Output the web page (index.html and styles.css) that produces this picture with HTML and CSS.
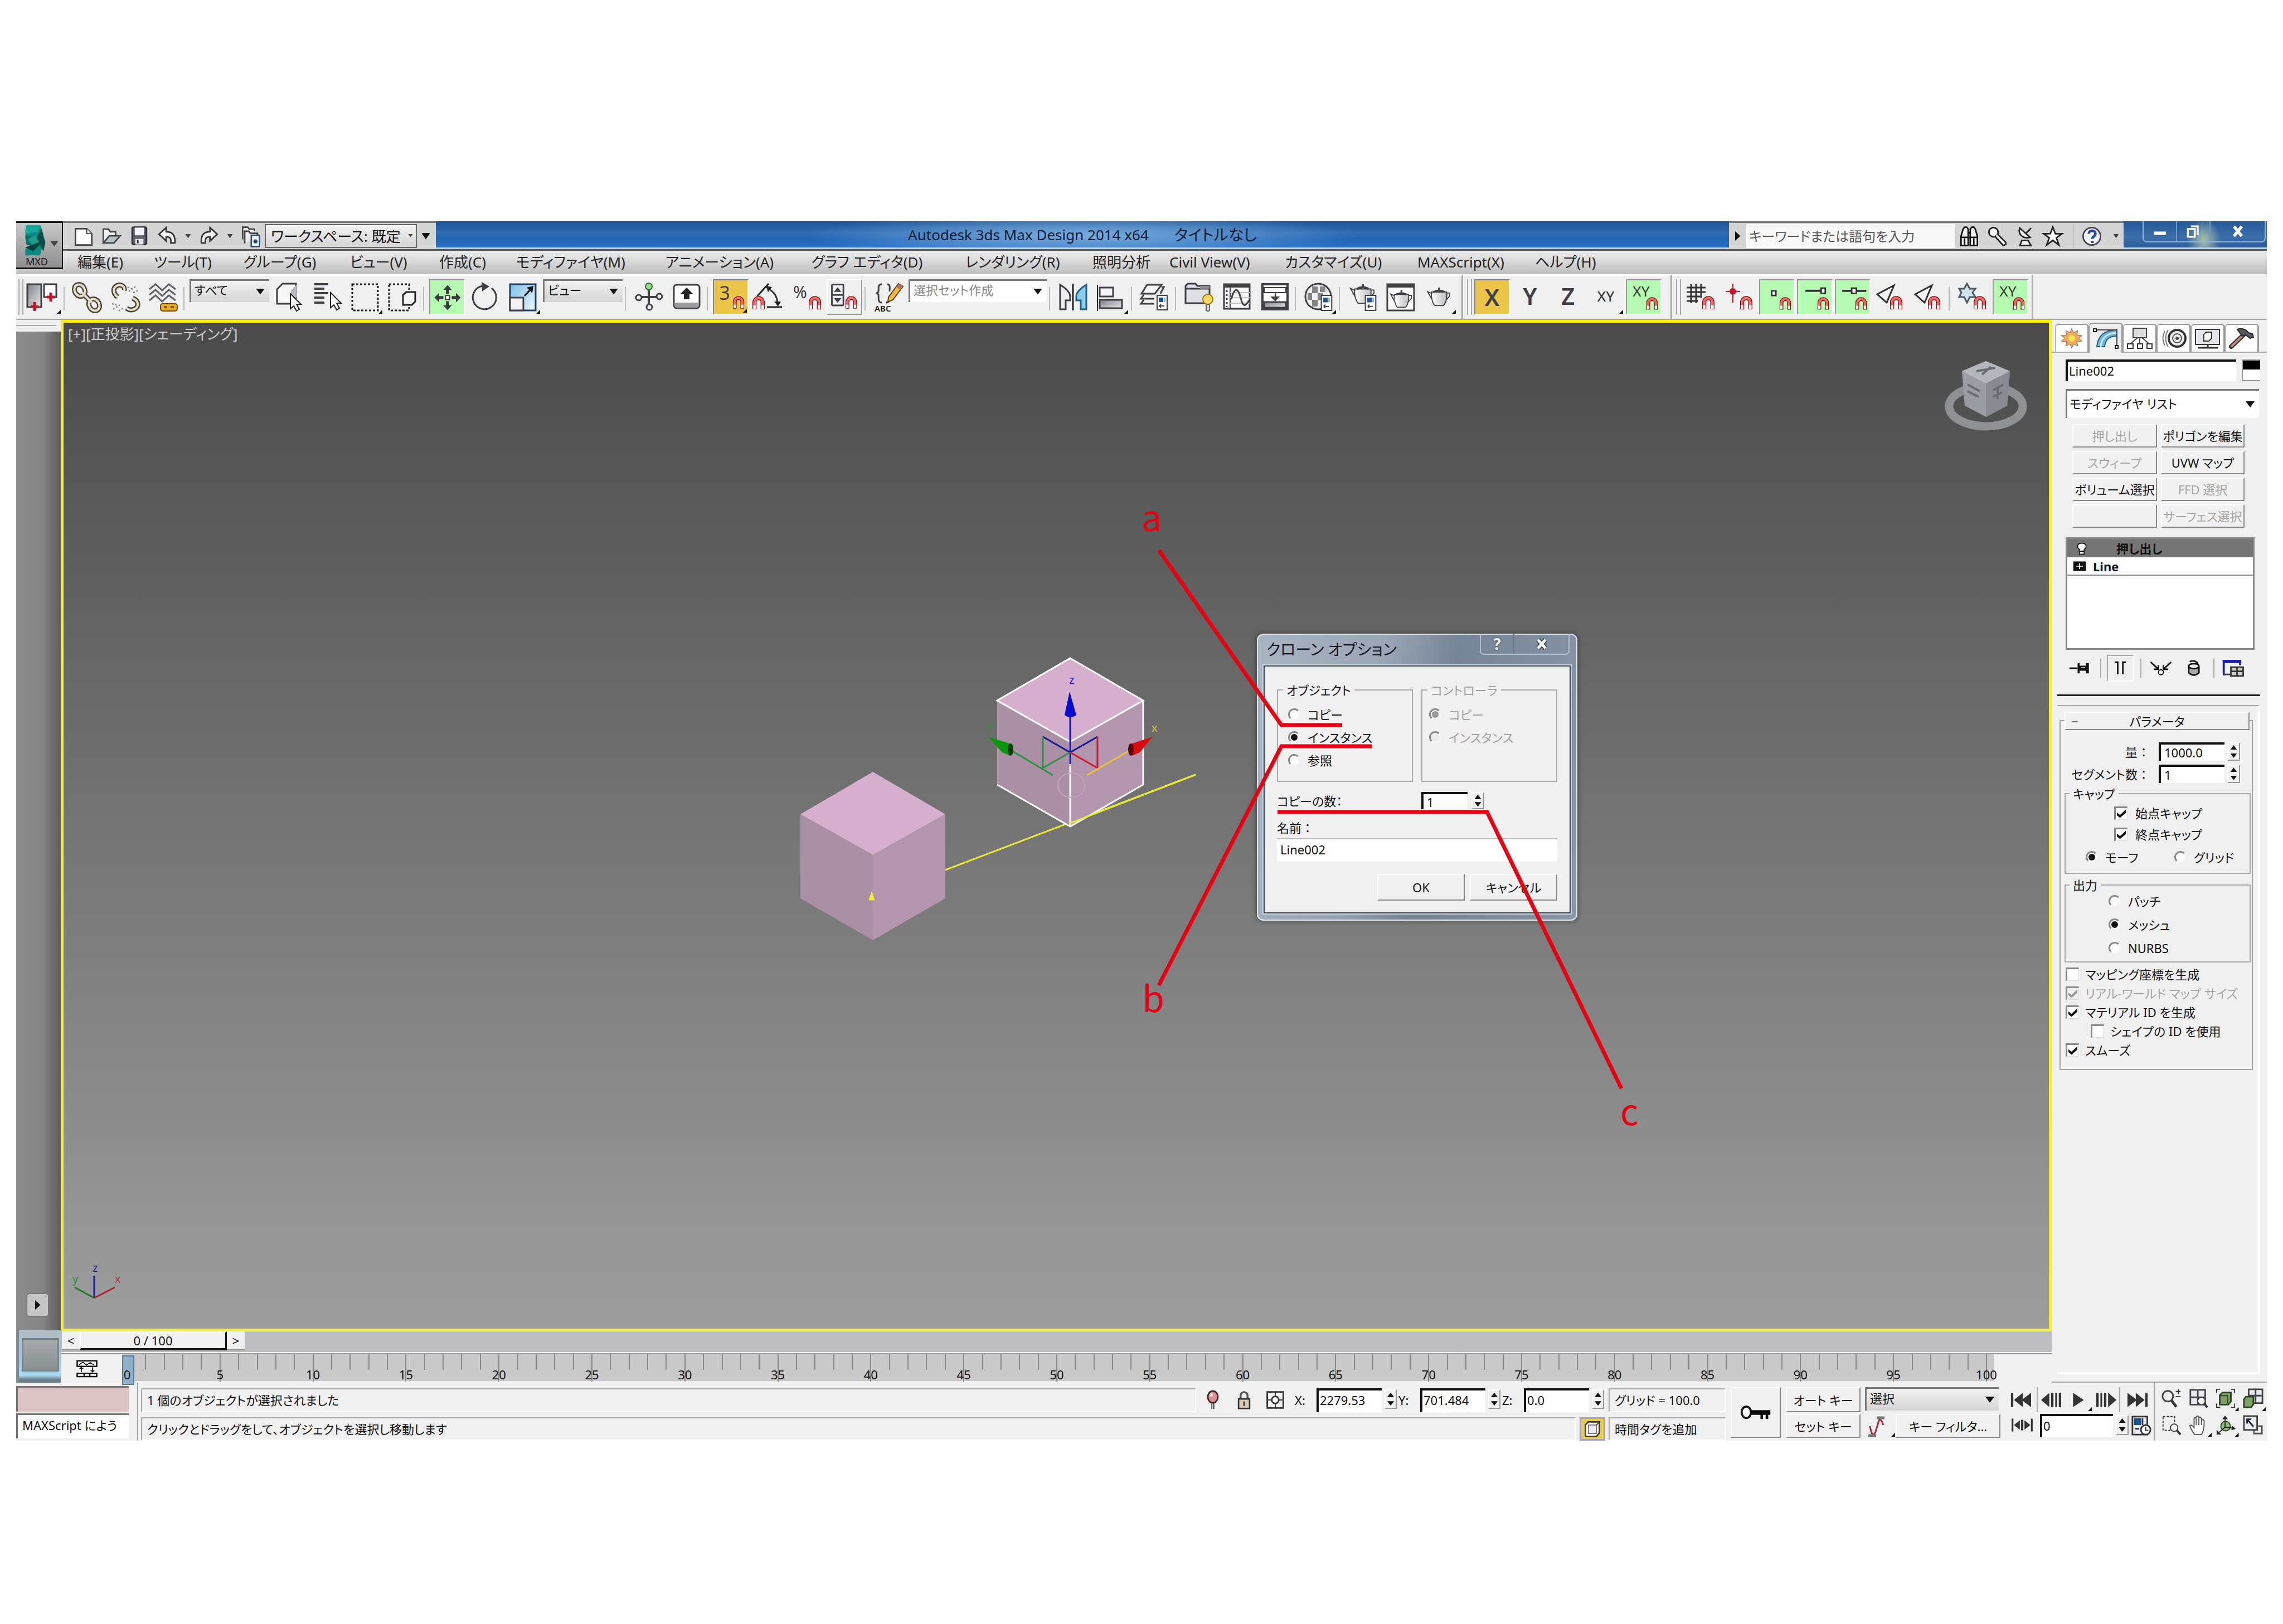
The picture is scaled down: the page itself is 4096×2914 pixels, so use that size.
FILE: index.html
```html
<!DOCTYPE html>
<html lang="ja">
<head>
<meta charset="utf-8">
<title>Autodesk 3ds Max Design 2014 x64</title>
<link rel="stylesheet" href="styles.css">
</head>
<body>
<svg class="sprite" aria-hidden="true">
  <defs>
    <linearGradient id="g-steel" x1="0" y1="0" x2="1" y2="1"><stop offset="0" stop-color="#7d8088"/><stop offset="1" stop-color="#e8e8ec"/></linearGradient>
    <linearGradient id="g-sky" x1="0" y1="0" x2="1" y2="1"><stop offset="0" stop-color="#7fc0e8"/><stop offset="1" stop-color="#eaf6fd"/></linearGradient>
    <linearGradient id="g-pot" x1="0" y1="0" x2="1" y2="0"><stop offset="0" stop-color="#fff"/><stop offset="1" stop-color="#bdbdc2"/></linearGradient>
  </defs>
  <symbol id="magnet" viewBox="0 0 24 26"><path d="M4 25V11a8 8 0 0 1 16 0v14" fill="none" stroke="#7a1218" stroke-width="8"/><path d="M4 18V11a8 8 0 0 1 16 0v7" fill="none" stroke="#ee6a68" stroke-width="5"/><path d="M4 24v-7M20 24v-7" stroke="#fff" stroke-width="5"/></symbol>
  <symbol id="card" viewBox="0 0 20 28"><rect x="1" y="1" width="18" height="26" fill="#fff" stroke="#3f3f46" stroke-width="2"/><rect x="4" y="5" width="8" height="8" fill="#1d5288"/><rect x="13" y="5" width="3" height="8" fill="#8fb4d4"/><path d="M5 20h9M5 20l3-3M5 20l3 3" stroke="#3f3f46" stroke-width="2" fill="none"/></symbol>
  <symbol id="pot" viewBox="0 0 48 40"><path d="M10 10C8 22 14 36 17 37h16c4-2 9-14 7-27z" fill="url(#g-pot)" stroke="#3f3f46" stroke-width="2"/><path d="M11 13L2 9l9 16M40 12h6v6l-7 8" fill="none" stroke="#3f3f46" stroke-width="2"/><path d="M14 10q11-6 22 0M25 7V1" stroke="#3f3f46" stroke-width="4" fill="none"/></symbol>
  <symbol id="panels" viewBox="0 0 64 64"><rect x="3" y="9" width="25" height="41" fill="url(#g-steel)" stroke="#3f3f46" stroke-width="3"/><rect x="33" y="9" width="22" height="23" fill="#fff" stroke="#3f3f46" stroke-width="3"/><path d="M16 41v16M9 49h14M45 24v16M38 32h14" stroke="#c01828" stroke-width="5"/></symbol>
  <symbol id="link" viewBox="0 0 64 64"><g fill="none" stroke="#4b463c" stroke-width="9"><ellipse cx="18" cy="20" rx="9" ry="11" transform="rotate(-30 18 20)"/><ellipse cx="44" cy="46" rx="9" ry="11" transform="rotate(-30 44 46)"/><path d="M22 24l18 18"/></g><g fill="none" stroke="#e7dfc8" stroke-width="4"><ellipse cx="18" cy="20" rx="9" ry="11" transform="rotate(-30 18 20)"/><ellipse cx="44" cy="46" rx="9" ry="11" transform="rotate(-30 44 46)"/><path d="M22 24l18 18"/></g></symbol>
  <symbol id="unlink" viewBox="0 0 64 64"><g fill="none" stroke="#4b463c" stroke-width="9"><path d="M30 20c2-8-8-12-14-8-7 4-6 14 2 20M34 52c8 6 18 2 20-5 1-6-2-10-9-13"/></g><g fill="none" stroke="#e7dfc8" stroke-width="4"><path d="M30 20c2-8-8-12-14-8-7 4-6 14 2 20M34 52c8 6 18 2 20-5 1-6-2-10-9-13"/></g><path d="M36 14l8 3M38 22l14-10M46 24l10-4M8 44l10 3M10 54l12-8M20 57l8-5" stroke="#777" stroke-width="2" stroke-dasharray="3 3"/></symbol>
  <symbol id="bind" viewBox="0 0 64 64"><path d="M7 18l11-9 12 11 12-11 12 9M7 28l11-9 12 11 12-11 12 9M7 38l11-9 12 11 12-11 12 9" fill="none" stroke="#60606a" stroke-width="3"/><rect x="27" y="44" width="30" height="13" rx="4" fill="#e8a823" stroke="#6d4a08" stroke-width="2"/><path d="M33 50h6M45 50h6" stroke="#6d4a08" stroke-width="3"/></symbol>
  <symbol id="selobj" viewBox="0 0 64 64"><path d="M10 40V18l10-10h24v26l-8 10H10z" fill="#f7f7f7" stroke="#3f3f46" stroke-width="3"/><path d="M35 20l10-10v22l-10 8z" fill="#b8b8be"/><path d="M34 26v27l6-5 5 9 5-3-5-9h8z" fill="#fff" stroke="#222" stroke-width="2"/></symbol>
  <symbol id="sellist" viewBox="0 0 64 64"><path d="M9 9h25M9 17h18M9 25h25M9 33h18M9 42h18" stroke="#3f3f46" stroke-width="4"/><path d="M38 24v27l6-5 5 9 5-3-5-9h8z" fill="#fff" stroke="#222" stroke-width="2"/></symbol>
  <symbol id="rect" viewBox="0 0 64 64"><rect x="9" y="9" width="46" height="47" fill="none" stroke="#222" stroke-width="3" stroke-dasharray="4 3"/></symbol>
  <symbol id="cross" viewBox="0 0 64 64"><rect x="7" y="9" width="36" height="47" fill="none" stroke="#222" stroke-width="3" stroke-dasharray="4 3"/><path d="M32 42V28l6-5h16v17l-6 6H32z" fill="#f4f4f4" stroke="#222" stroke-width="3"/></symbol>
  <symbol id="move" viewBox="0 0 64 64"><path d="M33 9l8 9h-5v8h-6v-8h-5zM33 57l8-9h-5v-8h-6v8h-5zM8 33l9-9v6h8v6h-8v6zM58 33l-9-9v6h-8v6h8v6z" fill="#3a3a40"/><rect x="29" y="29" width="8" height="8" fill="#fff" stroke="#3a3a40" stroke-width="2"/></symbol>
  <symbol id="rot" viewBox="0 0 64 64"><path d="M44 16a21 21 0 1 1-16-4" fill="none" stroke="#3f3f46" stroke-width="3"/><path d="M26 5l14 8-13 9z" fill="#3f3f46"/></symbol>
  <symbol id="scale" viewBox="0 0 64 64"><rect x="9" y="9" width="46" height="47" fill="url(#g-sky)" stroke="#1e3f60" stroke-width="3"/><rect x="9" y="33" width="24" height="23" fill="#f2f2f4" stroke="#3f3f46" stroke-width="3"/><path d="M35 30l14-15" stroke="#111" stroke-width="3"/><path d="M39 15l12-3-2 13z" fill="#111"/></symbol>
  <symbol id="pivot" viewBox="0 0 64 64"><path d="M32 15v34M12 32h40" stroke="#3f3f46" stroke-width="4"/><circle cx="32" cy="13" r="6" fill="#9fd692" stroke="#2e6a2a" stroke-width="2"/><g fill="#f0f0f0" stroke="#3f3f46" stroke-width="3"><circle cx="14" cy="33" r="5"/><circle cx="51" cy="31" r="5"/><circle cx="33" cy="50" r="5"/></g></symbol>
  <symbol id="kb" viewBox="0 0 64 64"><rect x="9" y="10" width="46" height="42" rx="5" fill="#fff" stroke="#3f3f46" stroke-width="3"/><path d="M11 42h42v8H11z" fill="#9a9aa2"/><path d="M32 15l12 12h-7v9H27v-9h-7z" fill="#222"/></symbol>
  <symbol id="angle" viewBox="0 0 64 64"><path d="M12 30L32 8M29 50h27" stroke="#222" stroke-width="3"/><path d="M31 17c12 6 17 16 17 28" fill="none" stroke="#333" stroke-width="3"/><path d="M27 12l11 2-7 9zM42 40l12 0-5 9z" fill="#222"/><use href="#magnet" x="3" y="30" width="22" height="26"/></symbol>
  <symbol id="spinsnap" viewBox="0 0 64 64"><rect x="8" y="8" width="22" height="40" rx="2" fill="#f2f2f4" stroke="#3f3f46" stroke-width="3"/><path d="M8 28h22" stroke="#3f3f46" stroke-width="3"/><path d="M19 13l7 9H12zM19 43l7-9H12z" fill="#3f3f46"/><use href="#magnet" x="34" y="30" width="22" height="26"/></symbol>
  <symbol id="braces" viewBox="0 0 64 64"><path d="M20 9c-8 0-5 8-6 13 0 2-4 3-4 3s4 1 4 3c1 5-2 14 6 14M30 9c6 0 4 8 4 13M28 42c6 0 5-4 5-8" fill="none" stroke="#3f3f46" stroke-width="3"/><path d="M32 32l18-24 8 5-18 24-9 4z" fill="#f2b53a" stroke="#5a3d10" stroke-width="2"/><path d="M50 8l8 5-4 6-8-5z" fill="#a8765a"/></symbol>
  <symbol id="mirror" viewBox="0 0 64 64"><path d="M32 8v48" stroke="#222" stroke-width="3"/><path d="M9 10c10 6 17 12 18 20v8h-8v16H9z" fill="#ececf0" stroke="#3f3f46" stroke-width="3"/><path d="M56 10c-10 6-17 12-18 20v8h8v16h10z" fill="#8accec" stroke="#1e5f8a" stroke-width="3"/></symbol>
  <symbol id="align" viewBox="0 0 64 64"><path d="M8 10v47" stroke="#222" stroke-width="2"/><rect x="12" y="15" width="24" height="16" fill="#f5f5f5" stroke="#3f3f46" stroke-width="3"/><rect x="12" y="37" width="40" height="15" fill="url(#g-steel)" stroke="#3f3f46" stroke-width="3"/></symbol>
  <symbol id="layers" viewBox="0 0 64 64"><path d="M18 10h26L32 26H8zM12 28l-5 7h24M12 37l-5 7h24M44 14l4 0-6 12" fill="#f7f7f7" stroke="#3f3f46" stroke-width="3"/><use href="#card" x="34" y="28" width="22" height="28"/></symbol>
  <symbol id="folder" viewBox="0 0 64 64"><path d="M8 43V12l4-4h14l3 4h22v31z" fill="#dfe0e6" stroke="#3f3f46" stroke-width="3"/><path d="M8 17h43" stroke="#3f3f46" stroke-width="3"/><path d="M34 12h17v5H34z" fill="#8c8c94"/><circle cx="48" cy="36" r="9" fill="#ffd75a" stroke="#9a7412" stroke-width="2"/><rect x="45" y="45" width="6" height="12" rx="2" fill="#d8d8dc" stroke="#666" stroke-width="2"/></symbol>
  <symbol id="curve" viewBox="0 0 64 64"><rect x="9" y="9" width="46" height="44" fill="#f7f7f7" stroke="#3f3f46" stroke-width="3"/><path d="M8 8h48v7H8z" fill="#3f3f46"/><path d="M20 15v38" stroke="#3f3f46" stroke-width="2"/><path d="M14 20v30" stroke="#3f3f46" stroke-width="3" stroke-dasharray="3 4"/><path d="M20 33h35M20 24h35M20 43h35" stroke="#c4c4c8" stroke-width="2"/><path d="M22 36c6-22 12-22 17-2s10 12 15 4" fill="none" stroke="#3f3f46" stroke-width="3"/></symbol>
  <symbol id="schem" viewBox="0 0 64 64"><rect x="10" y="9" width="45" height="45" fill="#fff" stroke="#3f3f46" stroke-width="4"/><path d="M13 15h39v9H13zM33 24v10" stroke="#3f3f46" stroke-width="2" fill="#fff"/><path d="M24 31h17l-8 9z" fill="#3f3f46"/><path d="M13 41h39v10H13z" fill="url(#g-steel)" stroke="#3f3f46" stroke-width="3"/></symbol>
  <symbol id="mat" viewBox="0 0 64 64"><circle cx="31" cy="31" r="23" fill="#eee" stroke="#3f3f46" stroke-width="3"/><path d="M20 13h10v12H20zM34 13h10v10H34zM12 25h8v12h-8zM30 25h10v12H30zM20 37h10v12H20z" fill="#85858c"/><use href="#card" x="35" y="28" width="22" height="29"/></symbol>
  <symbol id="rset" viewBox="0 0 64 64"><use href="#pot" x="8" y="7" width="46" height="40"/><use href="#card" x="35" y="28" width="22" height="29"/></symbol>
  <symbol id="rframe" viewBox="0 0 64 64"><rect x="8" y="9" width="48" height="47" fill="#fff" stroke="#3f3f46" stroke-width="3"/><path d="M7 8h50v7H7z" fill="#3f3f46"/><use href="#pot" x="11" y="19" width="43" height="34"/></symbol>
  <symbol id="render" viewBox="0 0 64 64"><use href="#pot" x="9" y="14" width="46" height="36"/></symbol>
  <symbol id="gridsnap" viewBox="0 0 64 64"><path d="M14 9v34M23 9v34M32 9v24M6 15h34M6 23h34M6 31h26M6 39h20" stroke="#333" stroke-width="3"/><use href="#magnet" x="34" y="30" width="22" height="26"/></symbol>
  <symbol id="pivsnap" viewBox="0 0 64 64"><path d="M21 8v34M8 22h26" stroke="#c01828" stroke-width="2"/><circle cx="21" cy="22" r="6" fill="#c01828"/><use href="#magnet" x="34" y="30" width="22" height="26"/></symbol>
  <symbol id="vertsnap" viewBox="0 0 64 64"><rect x="22" y="20" width="8" height="9" fill="#fff" stroke="#333" stroke-width="3"/><use href="#magnet" x="37" y="32" width="22" height="26"/></symbol>
  <symbol id="endsnap" viewBox="0 0 64 64"><path d="M14 20h32" stroke="#333" stroke-width="4"/><rect x="44" y="15" width="8" height="10" fill="#fff" stroke="#333" stroke-width="3"/><use href="#magnet" x="37" y="32" width="22" height="26"/></symbol>
  <symbol id="midsnap" viewBox="0 0 64 64"><path d="M12 20h46" stroke="#333" stroke-width="4"/><rect x="30" y="15" width="9" height="10" fill="#fff" stroke="#333" stroke-width="3"/><use href="#magnet" x="37" y="32" width="22" height="26"/></symbol>
  <symbol id="facesnap" viewBox="0 0 64 64"><path d="M8 27L38 11 25 42z" fill="#f4f4f4" stroke="#333" stroke-width="3"/><use href="#magnet" x="31" y="30" width="22" height="26"/></symbol>
  <symbol id="frozen" viewBox="0 0 64 64"><path d="M22 8l5 9h10l-5 7 5 8H27l-5 10-5-10H8l4-8-4-7h9z" fill="#cfe6ee" stroke="#4a5a66" stroke-width="3"/><use href="#magnet" x="34" y="30" width="22" height="26"/></symbol>

  <symbol id="new" viewBox="0 0 48 48"><path d="M8 9h22l10 10v22H8z" fill="#fff" stroke="#444" stroke-width="3"/><path d="M30 9v10h10" fill="#ddd" stroke="#444" stroke-width="2"/></symbol>
  <symbol id="open" viewBox="0 0 48 48"><path d="M8 36V10h10l4 5h10v8" fill="#f2f2f2" stroke="#444" stroke-width="3"/><path d="M8 37l12-14h21L29 37z" fill="#b6bfcc" stroke="#444" stroke-width="3"/></symbol>
  <symbol id="save" viewBox="0 0 48 48"><rect x="10" y="6" width="28" height="34" rx="3" fill="#5a5f6b" stroke="#2e2e34" stroke-width="3"/><rect x="15" y="7" width="18" height="15" fill="#f4f4f8"/><rect x="16" y="29" width="16" height="11" fill="#e8e8ec"/><path d="M21 31v7" stroke="#333" stroke-width="3"/></symbol>
  <symbol id="undo" viewBox="0 0 48 48"><path d="M8 20L22 7v8c12 0 18 6 17 22h-8c1-10-2-12-9-12v8z" fill="#f4f4f4" stroke="#333" stroke-width="3"/></symbol>
  <symbol id="redo" viewBox="0 0 48 48"><path d="M40 20L26 7v8C14 15 8 21 9 37h8c-1-10 2-12 9-12v8z" fill="#f4f4f4" stroke="#333" stroke-width="3"/></symbol>
  <symbol id="proj" viewBox="0 0 48 48"><path d="M8 30V6h10l3 4h10v4M12 38V14h8l3 4h14v4" fill="#eee" stroke="#444" stroke-width="3"/><rect x="25" y="22" width="16" height="22" fill="#fff" stroke="#2b4f78" stroke-width="3"/><circle cx="33" cy="34" r="4" fill="#1d5288"/></symbol>
  <symbol id="binoc" viewBox="0 0 48 48"><path d="M8 42V24l4-14 3-4h4l3 4v32zM26 42V10l3-4h4l3 4 4 14v18z" fill="#f2f2f2" stroke="#111" stroke-width="3"/><path d="M8 26h32M21 17h6M15 28v14M33 28v14" stroke="#111" stroke-width="3"/></symbol>
  <symbol id="keyt" viewBox="0 0 48 48"><circle cx="17" cy="16" r="9" fill="#fff" stroke="#222" stroke-width="3"/><path d="M20 24l16 18 5-2V36L25 20" fill="#fff" stroke="#222" stroke-width="3"/></symbol>
  <symbol id="dish" viewBox="0 0 48 48"><path d="M14 8c-4 10 4 22 20 18zM14 42l4-10h12l6 10zM26 18l10-10" fill="#f4f4f4" stroke="#222" stroke-width="3"/></symbol>
  <symbol id="startool" viewBox="0 0 48 48"><path d="M24 6l5 13h13L31 27l5 14-12-9-12 9 5-14L6 19h13z" fill="#fff" stroke="#222" stroke-width="3"/></symbol>
  <symbol id="help" viewBox="0 0 48 48"><circle cx="24" cy="24" r="17" fill="#f0f4fa" stroke="#445" stroke-width="3"/><path d="M18 19c0-8 13-8 13 0 0 5-6 5-6 10M25 33v4" fill="none" stroke="#2446a8" stroke-width="5"/></symbol>

  <symbol id="t-create" viewBox="0 0 48 40"><path d="M24 2l3 8 8-4-2 8 10 1-7 5 7 5-10 1 2 8-8-4-3 8-3-8-8 4 2-8-10-1 7-5-7-5 10-1-2-8 8 4z" fill="#f0a868" stroke="#a86830" stroke-width="1"/><circle cx="24" cy="20" r="6" fill="#ffe94a"/></symbol>
  <symbol id="t-modify" viewBox="0 0 48 40"><path d="M8 35C10 14 22 6 43 5v11c-14 0-20 8-21 19z" fill="#6db4e4" stroke="#265f8a" stroke-width="2"/><path d="M15 35c1-16 12-24 28-25" fill="none" stroke="#d2ecfa" stroke-width="3"/><path d="M4 5h40v30" fill="none" stroke="#444" stroke-width="2"/><path d="M2 3h5v5H2zM41 33h5v5h-5z" fill="#fff" stroke="#222" stroke-width="2"/></symbol>
  <symbol id="t-hier" viewBox="0 0 48 40"><rect x="12" y="2" width="24" height="17" fill="#ddd" stroke="#444" stroke-width="2"/><path d="M24 19v10M20 19L7 30M28 19l13 11" stroke="#444" stroke-width="2"/><path d="M2 30h10v8H2zM20 30h9v8h-9zM37 30h9v8h-9z" fill="#fff" stroke="#333" stroke-width="2"/></symbol>
  <symbol id="t-motion" viewBox="0 0 48 40"><circle cx="30" cy="20" r="15" fill="#eee" stroke="#333" stroke-width="4"/><circle cx="30" cy="20" r="8" fill="none" stroke="#555" stroke-width="2"/><circle cx="30" cy="20" r="3" fill="#444"/><path d="M14 5q-9 15 0 30M8 7Q1 20 8 33" fill="none" stroke="#777" stroke-width="2"/></symbol>
  <symbol id="t-display" viewBox="0 0 48 40"><rect x="2" y="4" width="43" height="27" fill="#e2e6ea" stroke="#333" stroke-width="2"/><path d="M24 31v5M6 37h36" stroke="#333" stroke-width="3"/><path d="M17 25V13l4-4h10v11l-5 5z" fill="#fff" stroke="#333" stroke-width="2"/></symbol>
  <symbol id="t-util" viewBox="0 0 48 40"><path d="M5 35L27 14" stroke="#4a2a26" stroke-width="8" stroke-linecap="round"/><path d="M6 34L26 15" stroke="#b58880" stroke-width="4" stroke-linecap="round"/><path d="M16 4c8-3 16 0 20 6l7 2 2 6-6 2-8-6-6 2z" fill="#55585e" stroke="#222" stroke-width="2"/></symbol>

  <symbol id="pin" viewBox="0 0 48 40"><path d="M2 20h16" stroke="#111" stroke-width="3"/><path d="M18 10h4v5h12v-5h6v20h-6v-5H22v5h-4z" fill="#111"/><path d="M24 19h9" stroke="#bbb" stroke-width="2"/></symbol>
  <symbol id="endres" viewBox="0 0 48 40"><path d="M12 8h6v24M34 8h-6v24" fill="none" stroke="#111" stroke-width="3"/></symbol>
  <symbol id="unique" viewBox="0 0 48 40"><path d="M4 8l15 14M44 8L29 22M10 22h9v-8M38 22h-9v-8" fill="none" stroke="#111" stroke-width="3"/><circle cx="24" cy="28" r="5" fill="none" stroke="#111" stroke-width="2"/></symbol>
  <symbol id="trash" viewBox="0 0 48 40"><path d="M14 17v12q10 9 20 0V17" fill="#aaa" stroke="#111" stroke-width="3"/><ellipse cx="24" cy="16" rx="10" ry="5" fill="#eee" stroke="#111" stroke-width="3"/><path d="M16 7q10-4 16 4" fill="none" stroke="#111" stroke-width="3"/></symbol>
  <symbol id="config" viewBox="0 0 48 40"><path d="M4 34V6h32v8" fill="none" stroke="#1a1a90" stroke-width="4"/><path d="M2 4h36v6H2z" fill="#1c1cb0"/><path d="M4 32h14M18 18h24v17H18zM18 26h24M30 18v17" fill="#ccc" stroke="#333" stroke-width="3"/></symbol>

  <symbol id="balloon" viewBox="0 0 40 40"><ellipse cx="20" cy="14" rx="10" ry="12" fill="#d98e94" stroke="#4a2024" stroke-width="3"/><path d="M18 27v11M22 27v11" stroke="#333" stroke-width="2"/><ellipse cx="17" cy="10" rx="3" ry="4" fill="#f8dcde"/></symbol>
  <symbol id="lock" viewBox="0 0 40 40"><path d="M13 18v-6c0-10 14-10 14 0v6" fill="none" stroke="#555" stroke-width="4"/><rect x="9" y="18" width="22" height="19" fill="#d9ccb4" stroke="#3a3430" stroke-width="3"/><path d="M20 23v9" stroke="#3a3430" stroke-width="3"/></symbol>
  <symbol id="absmode" viewBox="0 0 40 40"><rect x="4" y="4" width="32" height="32" fill="#f4f4f4" stroke="#333" stroke-width="3"/><path d="M20 4v32M4 20h32" stroke="#333" stroke-width="2"/><circle cx="20" cy="20" r="7" fill="#f4f4f4" stroke="#333" stroke-width="3"/></symbol>
  <symbol id="isocube" viewBox="0 0 40 40"><path d="M6 12l6-6h22v22l-6 7H6z" fill="#fff" stroke="#4a3a10" stroke-width="3"/><path d="M12 12h16v17H12z" fill="#eee" stroke="#776a9a" stroke-width="2"/><path d="M28 12l6-6" stroke="#4a3a10" stroke-width="2"/></symbol>
  <symbol id="key" viewBox="0 0 64 32"><ellipse cx="14" cy="15" rx="9" ry="11" fill="#fff" stroke="#111" stroke-width="4"/><path d="M22 11h38v9h-4v8h-5v-8h-5v8h-5v-8H22z" fill="#111"/></symbol>
  <symbol id="tangent" viewBox="0 0 40 40"><path d="M8 20q4 24 10 10L24 10q3-6 8 8" fill="none" stroke="#a8283c" stroke-width="3"/><path d="M5 37h14M20 5h14" stroke="#777" stroke-width="5"/></symbol>
  <symbol id="minicurve" viewBox="0 0 48 40"><path d="M3 4h42v12H3z" fill="#fff" stroke="#111" stroke-width="3"/><path d="M7 13l8-6 8 6 8-5 8 5" stroke="#111" stroke-width="2" fill="none"/><path d="M12 28v-9M8 22l4-4 4 4M36 18v9M32 24l4 4 4-4" stroke="#111" stroke-width="2" fill="none"/><path d="M3 31h42v7H3zM18 31v7M30 31v7" fill="#fff" stroke="#111" stroke-width="3"/></symbol>

  <symbol id="p-start" viewBox="0 0 40 32"><path d="M2 4h4v24H2zM7 16L22 4v24zM20 16L36 4v24z" fill="#333"/></symbol>
  <symbol id="p-prev" viewBox="0 0 40 32"><path d="M2 16L16 4v24zM19 4h4v24h-4zM26 4h3v24h-3zM32 4h4v24h-4z" fill="#333"/></symbol>
  <symbol id="p-play" viewBox="0 0 40 32"><path d="M10 4v24l18-12z" fill="#333"/></symbol>
  <symbol id="p-next" viewBox="0 0 40 32"><path d="M38 16L24 4v24zM17 4h4v24h-4zM11 4h3v24h-3zM4 4h4v24H4z" fill="#333"/></symbol>
  <symbol id="p-end" viewBox="0 0 40 32"><path d="M34 4h4v24h-4zM33 16L18 4v24zM20 16L4 4v24z" fill="#333"/></symbol>
  <symbol id="p-key" viewBox="0 0 40 32"><path d="M2 4h3v22H2zM35 4h3v22h-3zM6 15l10-8v16zM34 15L24 7v16zM18 6h4v18h-4z" fill="#333"/></symbol>
  <symbol id="n-zoom" viewBox="0 0 40 40"><circle cx="13" cy="16" r="10" fill="#eef2f4" stroke="#444" stroke-width="3"/><path d="M20 24l9 12" stroke="#333" stroke-width="5"/><path d="M28 7h9M33 3v9M28 17h9" stroke="#222" stroke-width="2"/></symbol>
  <symbol id="n-all" viewBox="0 0 40 40"><path d="M4 4h28v28H4zM18 4v28M4 18h28" fill="#e6ecf4" stroke="#444" stroke-width="3"/><circle cx="25" cy="25" r="7" fill="#fff" stroke="#444" stroke-width="2"/><path d="M30 30l6 7" stroke="#333" stroke-width="4"/></symbol>
  <symbol id="n-ext" viewBox="0 0 40 40"><path d="M3 10V3h7M30 3h7v7M3 30v7h7M30 37h7v-7" fill="none" stroke="#333" stroke-width="2"/><path d="M9 14l5-5h16v17l-5 6H9z" fill="#7fa067" stroke="#2c4420" stroke-width="3"/><path d="M10 15h14v16" fill="none" stroke="#2c4420" stroke-width="2"/></symbol>
  <symbol id="n-extall" viewBox="0 0 40 40"><path d="M12 3h26v26H12zM25 3v26M12 15h26" fill="#e6ecf4" stroke="#444" stroke-width="3"/><path d="M3 22l4-5h14v14l-4 6H3z" fill="#7fa067" stroke="#2c4420" stroke-width="3"/></symbol>
  <symbol id="n-region" viewBox="0 0 40 40"><path d="M4 4h22v26H4z" fill="none" stroke="#333" stroke-width="2" stroke-dasharray="4 3"/><circle cx="25" cy="25" r="7" fill="#f4f4f4" stroke="#444" stroke-width="2"/><path d="M30 30l7 8" stroke="#333" stroke-width="4"/></symbol>
  <symbol id="n-pan" viewBox="0 0 40 40"><path d="M12 38C8 32 4 26 3 21c3-2 5 0 8 4V9c0-4 4-4 4 0V6c0-4 5-4 5 0v2c0-4 5-3 5 1v3c0-3 5-3 5 1 0 10 0 16-5 25z" fill="#fff" stroke="#555" stroke-width="2"/><path d="M15 9v11M20 8v12M25 11v9" stroke="#555" stroke-width="2"/></symbol>
  <symbol id="n-orbit" viewBox="0 0 40 40"><circle cx="20" cy="22" r="9" fill="#8fc07c" stroke="#2c4420" stroke-width="2"/><path d="M19 24V4M19 24l17 2M19 24L4 37" fill="none" stroke="#222" stroke-width="2"/><path d="M14 9l5-7 5 7zM32 21l7 6-8 3zM3 29v9h9z" fill="#222"/></symbol>
  <symbol id="n-max" viewBox="0 0 40 40"><path d="M30 22h7v14H22v-6" fill="none" stroke="#555" stroke-width="3"/><path d="M3 3h25v26H3z" fill="#e6ecf4" stroke="#444" stroke-width="3"/><path d="M9 17V9h8M10 10l11 13" fill="none" stroke="#222" stroke-width="3"/></symbol>
  <symbol id="timecfg" viewBox="0 0 40 40"><path d="M3 3h28v34H3z" fill="#e6ecf4" stroke="#333" stroke-width="3"/><rect x="6" y="6" width="13" height="13" fill="#1d5288"/><path d="M22 6v13M8 26h8" stroke="#333" stroke-width="3"/><circle cx="28" cy="28" r="9" fill="#fff" stroke="#333" stroke-width="3"/><path d="M28 22v7h5" fill="none" stroke="#333" stroke-width="2"/></symbol>
</svg>

<main class="app">
  <header class="top">
    <button class="logo" aria-label="アプリケーション">
      <svg viewBox="0 0 83 68" aria-hidden="true"><path d="M14 5h30l6 20-8 8H13z" fill="#0d8a83"/><path d="M14 5h30l-6 13-25 4z" fill="#18a79c"/><path d="M13 25l25 6 16 10-9 12-30-9z" fill="#0a6f69"/><path d="M18 34l14-9 18 15-18 10z" fill="#1a9b90"/><path d="M13 52l22-3 13-2-5 19H13z" fill="#0d8a83"/><path d="M46 12l8 28-4 18-6-12-8-16z" fill="#084f4b"/><path d="M13 50l36-14-20 22z" fill="#06413e"/><path d="M64 37h16l-8 11z" fill="#444"/></svg>
      <span>MXD</span>
    </button>
    <div class="titlebar">
      <div class="quick">
        <button aria-label="新規"><svg><use href="#new"/></svg></button>
        <button aria-label="開く"><svg><use href="#open"/></svg></button>
        <button aria-label="保存"><svg><use href="#save"/></svg></button>
        <button aria-label="元に戻す"><svg><use href="#undo"/></svg></button>
        <button class="narrow" aria-label="元に戻す履歴"><i class="tri small"></i></button>
        <button aria-label="やり直し"><svg><use href="#redo"/></svg></button>
        <button class="narrow" aria-label="やり直し履歴"><i class="tri small"></i></button>
        <button aria-label="プロジェクト"><svg><use href="#proj"/></svg></button>
        <div class="combo workspace"><select aria-label="ワークスペース"><option>ワークスペース: 既定</option></select></div>
        <button class="more" aria-label="カスタマイズ"><i class="tri"></i></button>
      </div>
      <h1 class="caption"><span>Autodesk 3ds Max Design 2014 x64</span><span class="doc">タイトルなし</span></h1>
      <div class="info">
        <button class="unfold" aria-label="展開"><i class="tri side"></i></button>
        <input class="search" type="text" aria-label="検索" placeholder="キーワードまたは語句を入力">
        <button aria-label="検索実行"><svg><use href="#binoc"/></svg></button>
        <button aria-label="サブスクリプション"><svg><use href="#keyt"/></svg></button>
        <button aria-label="コミュニケーション"><svg><use href="#dish"/></svg></button>
        <button aria-label="お気に入り"><svg><use href="#startool"/></svg></button>
        <button class="helpbtn" aria-label="ヘルプ"><svg><use href="#help"/></svg></button>
        <button class="narrow" aria-label="ヘルプメニュー"><i class="tri small"></i></button>
      </div>
      <div class="winctl">
        <div class="winbtns">
          <button aria-label="最小化"><svg viewBox="0 0 40 32"><path d="M7 16h26v8H7z" fill="#fff" stroke="#456" stroke-width="1"/></svg></button>
          <button aria-label="元のサイズに戻す"><svg viewBox="0 0 40 32"><path d="M15 6h14v18M9 11h14v16H9z" fill="none" stroke="#fff" stroke-width="4"/></svg></button>
          <button class="close" aria-label="閉じる"><svg viewBox="0 0 40 32"><path d="M12 6l16 20M28 6L12 26" stroke="#fff" stroke-width="6"/></svg></button>
        </div>
      </div>
    </div>
    <nav class="menubar" aria-label="メニュー">
      <button>編集(E)</button><button>ツール(T)</button><button>グループ(G)</button><button>ビュー(V)</button><button>作成(C)</button><button>モディファイヤ(M)</button><button>アニメーション(A)</button><button>グラフ エディタ(D)</button><button>レンダリング(R)</button><button>照明分析</button><button>Civil View(V)</button><button>カスタマイズ(U)</button><button>MAXScript(X)</button><button>ヘルプ(H)</button>
    </nav>
  </header>

  <div class="toolbars">
    <div class="toolbar" role="toolbar" aria-label="メイン">
      <i class="grip"></i>
      <button class="tool fly" aria-label="パネル"><svg><use href="#panels"/></svg></button>
      <i class="sep"></i>
      <button class="tool" aria-label="リンク"><svg><use href="#link"/></svg></button>
      <button class="tool" aria-label="リンク解除"><svg><use href="#unlink"/></svg></button>
      <button class="tool" aria-label="バインド"><svg><use href="#bind"/></svg></button>
      <i class="sep"></i>
      <div class="combo flat"><select aria-label="選択フィルタ"><option>すべて</option></select></div>
      <button class="tool" aria-label="オブジェクトを選択"><svg><use href="#selobj"/></svg></button>
      <button class="tool" aria-label="名前で選択"><svg><use href="#sellist"/></svg></button>
      <button class="tool fly" aria-label="矩形領域"><svg><use href="#rect"/></svg></button>
      <button class="tool" aria-label="窓/交差"><svg><use href="#cross"/></svg></button>
      <i class="sep"></i>
      <button class="tool on-green" aria-label="移動"><svg><use href="#move"/></svg></button>
      <button class="tool" aria-label="回転"><svg><use href="#rot"/></svg></button>
      <button class="tool fly" aria-label="スケール"><svg><use href="#scale"/></svg></button>
      <div class="combo flat"><select aria-label="参照座標系"><option>ビュー</option></select></div>
      <i class="sep"></i>
      <button class="tool" aria-label="基点"><svg><use href="#pivot"/></svg></button>
      <button class="tool" aria-label="キーボード"><svg><use href="#kb"/></svg></button>
      <i class="sep"></i>
      <button class="tool on-gold fly" aria-label="3D スナップ"><svg viewBox="0 0 64 64"><text class="glyph" x="10" y="37">3</text><use href="#magnet" x="36" y="30" width="22" height="26"/></svg></button>
      <button class="tool" aria-label="角度スナップ"><svg><use href="#angle"/></svg></button>
      <button class="tool" aria-label="パーセントスナップ"><svg viewBox="0 0 64 64"><text class="percent" x="8" y="34">%</text><use href="#magnet" x="36" y="30" width="22" height="26"/></svg></button>
      <button class="tool raised" aria-label="スピナースナップ"><svg><use href="#spinsnap"/></svg></button>
      <i class="sep"></i>
      <button class="tool" aria-label="名前付き選択セット"><svg viewBox="0 0 64 64"><use href="#braces"/><text class="abc" x="7" y="58">ABC</text></svg></button>
      <div class="combo named"><select aria-label="名前付き選択"><option>選択セット作成</option></select></div>
      <i class="sep"></i>
      <button class="tool" aria-label="ミラー"><svg><use href="#mirror"/></svg></button>
      <button class="tool fly" aria-label="位置合わせ"><svg><use href="#align"/></svg></button>
      <i class="sep"></i>
      <button class="tool" aria-label="レイヤ"><svg><use href="#layers"/></svg></button>
      <i class="sep"></i>
      <button class="tool" aria-label="リボン"><svg><use href="#folder"/></svg></button>
      <button class="tool" aria-label="カーブエディタ"><svg><use href="#curve"/></svg></button>
      <button class="tool" aria-label="スケマティック"><svg><use href="#schem"/></svg></button>
      <i class="sep"></i>
      <button class="tool fly" aria-label="マテリアル"><svg><use href="#mat"/></svg></button>
      <i class="sep"></i>
      <button class="tool" aria-label="レンダリング設定"><svg><use href="#rset"/></svg></button>
      <button class="tool" aria-label="フレームウィンドウ"><svg><use href="#rframe"/></svg></button>
      <button class="tool fly" aria-label="レンダリング"><svg><use href="#render"/></svg></button>
    </div>
    <div class="toolbar axis" role="toolbar" aria-label="軸">
      <i class="grip"></i>
      <button class="tool on-gold letter">X</button>
      <button class="tool letter">Y</button>
      <button class="tool letter">Z</button>
      <button class="tool letter pair fly">XY</button>
      <button class="tool on-green" aria-label="XY スナップ"><svg viewBox="0 0 64 64"><text class="xy" x="11" y="31">XY</text><use href="#magnet" x="37" y="32" width="22" height="26"/></svg></button>
    </div>
    <div class="toolbar snaps" role="toolbar" aria-label="スナップ">
      <i class="grip"></i>
      <button class="tool" aria-label="グリッド"><svg><use href="#gridsnap"/></svg></button>
      <button class="tool" aria-label="基点スナップ"><svg><use href="#pivsnap"/></svg></button>
      <button class="tool on-green" aria-label="頂点"><svg><use href="#vertsnap"/></svg></button>
      <button class="tool on-green" aria-label="端点"><svg><use href="#endsnap"/></svg></button>
      <button class="tool on-green" aria-label="中点"><svg><use href="#midsnap"/></svg></button>
      <button class="tool" aria-label="エッジ"><svg><use href="#facesnap"/></svg></button>
      <button class="tool" aria-label="面"><svg><use href="#facesnap"/></svg></button>
      <i class="sep"></i>
      <button class="tool" aria-label="フリーズ"><svg><use href="#frozen"/></svg></button>
      <button class="tool on-green" aria-label="軸拘束"><svg viewBox="0 0 64 64"><text class="xy" x="11" y="31">XY</text><use href="#magnet" x="37" y="32" width="22" height="26"/></svg></button>
    </div>
  </div>

  <div class="work">
    <aside class="leftstrip">
      <div class="striphead"></div>
      <div class="stripbody"><button class="expand" aria-label="展開"><i class="tri side"></i></button></div>
      <button class="layouttab" aria-label="ビューポートレイアウト"><i></i></button>
    </aside>

    <section class="center">
      <div class="viewport">
        <svg class="scene" viewBox="109 574 3572 1815" preserveAspectRatio="none" aria-hidden="true">
          <path d="M1566 1385l130 76-130 73-130-73z" fill="#d5afcd"/>
          <path d="M1436 1461l130 73v153l-130-75z" fill="#ab8fa5"/>
          <path d="M1696 1461l-130 73v153l130-75z" fill="#b395ad"/>
          <path d="M1696 1561L2145 1390" stroke="#e8e83a" stroke-width="3"/>
          <path d="M1564 1600l5 15h-10z" fill="#f0f030" stroke="#f0f030" stroke-width="1"/>
          <path d="M1920 1181l131 76-131 74-131-74z" fill="#d5afcd"/>
          <path d="M1789 1257l131 74v152l-131-75z" fill="#ab8fa5"/>
          <path d="M2051 1257l-131 74v152l131-75z" fill="#b395ad"/>
          <path d="M2051 1257v151l-131 75-131-75M1920 1181l131 76-131 74-131-74zM1920 1331v152" fill="none" stroke="#fff" stroke-width="3"/>
          <path d="M1920 1477L2145 1390" stroke="#e8e83a" stroke-width="3"/>
          <ellipse cx="1922" cy="1409" rx="24" ry="22" fill="none" stroke="#c3a3bc" stroke-width="2"/>
          <g fill="none" stroke-width="3">
            <path d="M1920 1287v84" stroke="#1414b4"/>
            <path d="M1871 1322l49 28 49-28" stroke="#15159c"/>
            <path d="M1871 1322v56l49-28M1815 1347l74 44" stroke="#2c9440"/>
            <path d="M1969 1322v56l-49-28" stroke="#cc1c2c"/>
            <path d="M2026 1347l-76 44" stroke="#e8c43c"/>
          </g>
          <path d="M1919 1241l12 42q-11 8-21 0z" fill="#0a0ad2"/>
          <path d="M1773 1322l44 14-5 20-14-6z" fill="#0c980c"/><ellipse cx="1813" cy="1345" rx="5" ry="11" fill="#063c08"/>
          <path d="M2068 1322l-42 14 5 20 14-6z" fill="#d80c0c"/><ellipse cx="2029" cy="1345" rx="5" ry="11" fill="#5a0606"/>
          <g class="axisname"><text x="1918" y="1227" fill="#1818c8">z</text><text x="1771" y="1308" fill="#2e8e3c">y</text><text x="2066" y="1313" fill="#d8c040">x</text></g>
          <g fill="none" stroke-width="3"><path d="M169 2329v-40" stroke="#1818b0"/><path d="M169 2329l-35-19" stroke="#207a28"/><path d="M169 2329l37-19" stroke="#b02028"/></g>
          <g class="axisname"><text x="166" y="2282" fill="#1818b0">z</text><text x="130" y="2302" fill="#308a38">y</text><text x="206" y="2302" fill="#c03038">x</text></g>
          <ellipse cx="3563" cy="729" rx="66" ry="36" fill="none" stroke="#8e9094" stroke-width="15"/>
          <path d="M3563 648l43 18-5 62-38 20-38-20-5-62z" fill="#9a9da3"/>
          <path d="M3563 648l43 18-43 22-43-22z" fill="#b4b7bc"/><path d="M3606 666l-43 22v60l38-20z" fill="#888b92"/>
          <g stroke="#6a6d74" stroke-width="4" fill="none"><path d="M3546 666l34-6M3556 672l16-14M3530 690l22 12M3530 702l20 10M3576 700l18-10M3576 712l16-8M3584 694v22"/></g>
        </svg>
        <p class="vplabel">[+][正投影][シェーディング]</p>

        <form class="dialog" aria-label="クローン オプション" onsubmit="return false">
          <div class="dlgtitle"><h2>クローン オプション</h2>
            <div class="dlgbtns"><button type="button" aria-label="ヘルプ">?</button><button type="button" aria-label="閉じる"><svg viewBox="0 0 40 32"><path d="M12 7l16 18M28 7L12 25" stroke="#3c4652" stroke-width="10"/><path d="M12 7l16 18M28 7L12 25" stroke="#fff" stroke-width="6"/></svg></button></div>
          </div>
          <div class="dlgbody">
            <div class="pair-sets">
              <fieldset><legend>オブジェクト</legend>
                <label><input type="radio" name="obj">コピー</label>
                <label><input type="radio" name="obj" checked>インスタンス</label>
                <label><input type="radio" name="obj">参照</label>
              </fieldset>
              <fieldset class="ctl" disabled><legend>コントローラ</legend>
                <label><input type="radio" name="ctl" checked>コピー</label>
                <label><input type="radio" name="ctl">インスタンス</label>
              </fieldset>
            </div>
            <div class="copies"><label for="ncopies">コピーの数：</label><input class="num" id="ncopies" type="text" value="1"><span class="spin"><button type="button" aria-label="増やす"></button><button type="button" aria-label="減らす"></button></span></div>
            <label class="namelabel" for="objname">名前<span class="colon">：</span></label>
            <input class="objname" id="objname" type="text" value="Line002">
            <div class="dlgactions"><button class="push">OK</button><button class="push" type="button">キャンセル</button></div>
          </div>
        </form>

        <svg class="notes" viewBox="109 574 3572 1815" preserveAspectRatio="none">
          <g fill="none" stroke="#e60012" stroke-width="7"><path d="M2079 987L2299 1301H2408"/><path d="M2079 1768L2299 1339H2461"/><path d="M2909 1953L2668 1457H2292"/></g>
          <g class="noteletter"><text x="2066" y="953">a</text><text x="2069" y="1816">b</text><text x="2923" y="2019">c</text></g>
        </svg>
      </div>
      <div class="slider"><button class="arrow">&lt;</button><button class="thumb">0 / 100</button><button class="arrow">&gt;</button></div>
      <div class="trackbar">
        <button class="minicurve" aria-label="ミニ カーブ エディタ"><svg><use href="#minicurve"/></svg></button>
        <div class="ruler" id="ruler"></div>
      </div>
    </section>

    <aside class="panel">
      <div class="tabs">
        <button aria-label="作成"><svg><use href="#t-create"/></svg></button>
        <button class="active" aria-label="修正"><svg><use href="#t-modify"/></svg></button>
        <button aria-label="階層"><svg><use href="#t-hier"/></svg></button>
        <button aria-label="モーション"><svg><use href="#t-motion"/></svg></button>
        <button aria-label="表示"><svg><use href="#t-display"/></svg></button>
        <button aria-label="ユーティリティ"><svg><use href="#t-util"/></svg></button>
      </div>
      <div class="namerow"><input class="num" type="text" aria-label="オブジェクト名" value="Line002"><button class="swatch" aria-label="オブジェクトカラー"></button></div>
      <div class="combo modlist"><select aria-label="モディファイヤ リスト"><option>モディファイヤ リスト</option></select></div>
      <div class="modbtns">
        <button class="push" disabled>押し出し</button><button class="push">ポリゴンを編集</button>
        <button class="push" disabled>スウィープ</button><button class="push">UVW マップ</button>
        <button class="push">ボリューム選択</button><button class="push" disabled>FFD 選択</button>
        <button class="push" disabled aria-label="未設定"></button><button class="push" disabled>サーフェス選択</button>
      </div>
      <ul class="stack">
        <li class="sel"><svg viewBox="0 0 28 28" aria-hidden="true"><path d="M9 20v-4C3 13 3 3 14 3s11 10 5 13v4z" fill="#fff" stroke="#111" stroke-width="2"/><path d="M9 21h10v5H9z" fill="#fff" stroke="#111" stroke-width="2"/></svg><span>押し出し</span></li>
        <li><svg viewBox="0 0 28 28" aria-hidden="true"><path d="M1 4h26v20H1z" fill="#111"/><path d="M7 14h14M14 8v12" stroke="#fff" stroke-width="2"/></svg><span>Line</span></li>
      </ul>
      <div class="stacktools">
        <button aria-label="固定"><svg><use href="#pin"/></svg></button><i></i>
        <button class="in" aria-label="最終結果"><svg><use href="#endres"/></svg></button><i></i>
        <button aria-label="固有にする"><svg><use href="#unique"/></svg></button>
        <button aria-label="除去"><svg><use href="#trash"/></svg></button><i></i>
        <button aria-label="設定"><svg><use href="#config"/></svg></button>
      </div>
      <div class="rollouts">
        <section class="rollout">
          <button class="rollhead"><span>−</span>パラメータ</button>
          <div class="prow"><label for="amount">量<span class="colon">：</span></label><input class="num" id="amount" type="text" value="1000.0"><span class="spin"><button aria-label="増やす"></button><button aria-label="減らす"></button></span></div>
          <div class="prow"><label for="segs">セグメント数<span class="colon">：</span></label><input class="num" id="segs" type="text" value="1"><span class="spin"><button aria-label="増やす"></button><button aria-label="減らす"></button></span></div>
          <fieldset class="caps"><legend>キャップ</legend>
            <label><input type="checkbox" checked>始点キャップ</label>
            <label><input type="checkbox" checked>終点キャップ</label>
            <div class="two"><label><input type="radio" name="cap" checked>モーフ</label><label><input type="radio" name="cap">グリッド</label></div>
          </fieldset>
          <fieldset class="outs"><legend>出力</legend>
            <label><input type="radio" name="out">パッチ</label>
            <label><input type="radio" name="out" checked>メッシュ</label>
            <label><input type="radio" name="out">NURBS</label>
          </fieldset>
          <div class="checks">
            <label><input type="checkbox">マッピング座標を生成</label>
            <label class="off"><input type="checkbox" checked disabled>リアル-ワールド マップ サイズ</label>
            <label><input type="checkbox" checked>マテリアル ID を生成</label>
            <label class="indent"><input type="checkbox">シェイプの ID を使用</label>
            <label><input type="checkbox" checked>スムーズ</label>
          </div>
        </section>
      </div>
    </aside>
  </div>

  <footer class="status">
    <div class="listener"><input class="pink" type="text" aria-label="マクロ レコーダ"><input class="mini" type="text" aria-label="リスナー" value="MAXScript によう"></div>
    <div class="prompts">
      <div class="line">
        <output class="sunk grow">1 個のオブジェクトが選択されました</output>
        <div class="modes"><button aria-label="選択範囲を分離"><svg><use href="#balloon"/></svg></button><button aria-label="選択ロック"><svg><use href="#lock"/></svg></button><button aria-label="絶対モード"><svg><use href="#absmode"/></svg></button></div>
        <div class="coord"><label for="cx">X:</label><input class="num" id="cx" type="text" value="2279.53"><span class="spin"><button aria-label="増やす"></button><button aria-label="減らす"></button></span></div>
        <div class="coord"><label for="cy">Y:</label><input class="num" id="cy" type="text" value="701.484"><span class="spin"><button aria-label="増やす"></button><button aria-label="減らす"></button></span></div>
        <div class="coord"><label for="cz">Z:</label><input class="num" id="cz" type="text" value="0.0"><span class="spin"><button aria-label="増やす"></button><button aria-label="減らす"></button></span></div>
        <output class="sunk fixed">グリッド = 100.0</output>
      </div>
      <div class="line">
        <output class="sunk grow">クリックとドラッグをして、オブジェクトを選択し移動します</output>
        <button class="adaptive" aria-label="アダプティブ"><svg><use href="#isocube"/></svg></button>
        <output class="sunk fixed">時間タグを追加</output>
      </div>
    </div>
    <div class="keys">
      <button class="push bigkey" aria-label="キーを設定"><svg><use href="#key"/></svg></button>
      <div class="keycol"><button class="push">オート キー</button><button class="push">セット キー</button></div>
      <div class="keycol wide">
        <div class="combo flat"><select aria-label="キー対象"><option>選択</option></select></div>
        <div class="filterrow"><button class="tangent fly" aria-label="接線"><svg><use href="#tangent"/></svg></button><button class="push">キー フィルタ...</button></div>
      </div>
    </div>
    <div class="play">
      <div class="prow1">
        <button aria-label="先頭へ"><svg><use href="#p-start"/></svg></button><button aria-label="前のフレーム"><svg><use href="#p-prev"/></svg></button><button class="fly" aria-label="再生"><svg><use href="#p-play"/></svg></button><button aria-label="次のフレーム"><svg><use href="#p-next"/></svg></button><button aria-label="末尾へ"><svg><use href="#p-end"/></svg></button>
      </div>
      <div class="prow2">
        <button aria-label="キー モード"><svg><use href="#p-key"/></svg></button><input class="num" type="text" aria-label="現在のフレーム" value="0"><span class="spin"><button aria-label="増やす"></button><button aria-label="減らす"></button></span><button class="tcfg" aria-label="時間設定"><svg><use href="#timecfg"/></svg></button>
      </div>
    </div>
    <div class="nav">
      <button aria-label="ズーム"><svg><use href="#n-zoom"/></svg></button><button aria-label="全ズーム"><svg><use href="#n-all"/></svg></button><button class="fly" aria-label="全範囲"><svg><use href="#n-ext"/></svg></button><button class="fly" aria-label="全ビュー全範囲"><svg><use href="#n-extall"/></svg></button>
      <button aria-label="領域ズーム"><svg><use href="#n-region"/></svg></button><button class="fly" aria-label="パン"><svg><use href="#n-pan"/></svg></button><button class="fly" aria-label="オービット"><svg><use href="#n-orbit"/></svg></button><button aria-label="最大化"><svg><use href="#n-max"/></svg></button>
    </div>
  </footer>
</main>
<script src="ruler.js"></script>
</body>
</html>
```
FILE: ruler.js
```js
// Builds the frame ruler: one tick per frame, a number on every fifth.
const ruler = document.getElementById('ruler');
for (let frame = 0; frame <= 100; frame++) {
  const tick = document.createElement('span');
  tick.className = 'tick';
  if (frame % 5 === 0) {
    tick.classList.add('major');
    const label = document.createElement('b');
    label.textContent = frame;
    tick.append(label);
  }
  if (frame === 0) tick.classList.add('current');
  if (frame === 100) tick.classList.add('last');
  ruler.append(tick);
}
```
FILE: styles.css
```css
* { box-sizing: border-box; }

body {
  margin: 0;
  min-height: 100vh;
  padding: 397px 29px 329px;
  display: flex;
  background: #fff;
  color: #111;
  font: 22px/28px "Noto Sans", "Noto Sans CJK JP", sans-serif;
  font-feature-settings: "palt" 1;
}

button, input, select, output { font: inherit; font-feature-settings: inherit; color: inherit; }
button { border: 0; padding: 0; background: none; white-space: nowrap; }
input, select { min-width: 0; border-radius: 0; }
h1, h2, p, ul, fieldset, legend { margin: 0; padding: 0; font-size: inherit; font-weight: 400; }
svg { display: block; }
i { display: block; flex: none; }
.sprite { position: absolute; width: 0; height: 0; }
.colon { font-feature-settings: normal; }

.app { flex: 1; display: flex; flex-direction: column; background: #f0f0f0; min-width: 0; }

.tri { width: 16px; height: 12px; background: #111; clip-path: polygon(0 0, 100% 0, 50% 100%); }
.tri.small { width: 10px; height: 8px; background: #444; }
.tri.side { width: 10px; height: 18px; clip-path: polygon(0 0, 100% 50%, 0 100%); }

.combo { position: relative; height: 41px; flex: none; }
.combo select { appearance: none; width: 100%; height: 100%; padding: 0 28px 0 6px; background: linear-gradient(#f2f2f2, #d4d4d4); border: 3px solid #777; border-right: 0; border-bottom: 0; outline: 0; }
.combo::after { content: ""; position: absolute; right: 8px; top: 50%; margin-top: -4px; width: 16px; height: 11px; background: #111; clip-path: polygon(0 0, 100% 0, 50% 100%); pointer-events: none; }
.flat { width: 143px; }
.flat select { padding-bottom: 6px; }
.named { width: 248px; }
.named select { background: #fff; color: #888; padding-bottom: 6px; }

/* title bar and menus */
.top { display: grid; grid-template-columns: 84px 1fr; grid-template-rows: 53px 42px; }
.logo {
  grid-area: 1 / 1 / 3 / 2; z-index: 1; height: 86px; border: 2px solid #111; border-width: 3px 2px 3px 0;
  background: linear-gradient(#c8c8c8, #8e8e8e); display: flex; flex-direction: column; align-items: center;
}
.logo svg { width: 83px; height: 60px; }
.logo span { font-size: 18px; line-height: 18px; padding-right: 8px; }
.titlebar { grid-area: 1 / 2; display: flex; border-bottom: 3px solid #5c5c5c; min-width: 0; }
.quick, .info { display: flex; align-items: center; background: #d4d4d4; border-top: 3px solid #777; }
.quick { width: 669px; padding-left: 12px; }
.quick button, .info button { width: 50px; display: flex; justify-content: center; }
.quick button svg, .info button svg { width: 44px; height: 44px; }
.quick .narrow, .info .narrow { width: 25px; }
.quick .more { width: 32px; }
.workspace { width: 273px; height: 43px; }
.workspace select { font-size: 26px; border: 2px solid #666; padding: 0 18px 0 9px; }
.workspace::after { right: 7px; width: 9px; height: 6px; background: #555; }
.caption {
  flex: 1; display: flex; justify-content: center; align-items: center; gap: 46px; font-size: 26px; color: #0c1c34;
  border-bottom: 3px solid #b4d4f0;
  background: radial-gradient(ellipse 500px 40px at 50% 55%, #78acdf 0, #78acdf88 50%, transparent 100%), linear-gradient(#1d5496, #2f6cb0 45%, #2263b4 65%, #2470c8);
}
.doc { font-size: 28px; }
.info { width: 708px; }
.info .unfold { width: 31px; }
.search { width: 375px; height: 43px; border: 0; background: #f8f8f8; padding: 0 5px; font-size: 24px; }
.search::placeholder { color: #555; opacity: 1; }
.info .helpbtn { margin-left: 12px; border-left: 1px solid #bbb; width: 64px; }
.winctl { width: 257px; padding-left: 34px; border-bottom: 3px solid #b4d4f0; background: radial-gradient(ellipse 30px 40px at 144px 34px, #a8bfa8, transparent), linear-gradient(#24589a, #3c6ea8 60%, #2b5c9c); }
.winbtns { display: flex; width: 221px; height: 38px; border: 2px solid #8fb4dc; border-top: 0; border-radius: 0 0 8px 8px; }
.winbtns button { width: 60px; border-right: 2px solid #6f98c8; display: grid; place-items: center; }
.winbtns .close { flex: 1; border: 0; }
.winbtns svg { width: 36px; height: 28px; }
.menubar {
  grid-area: 2 / 1 / 3 / 3; padding-left: 110px; padding-bottom: 2px; display: grid; align-items: center; justify-content: start;
  grid-template-columns: 137px 161px 191px 160px 138px 268px 262px 276px 228px 138px 207px 238px 211px 117px;
  background: linear-gradient(#ececec, #dcdcdc 40%, #bdbdbd); font-size: 26px;
}
.menubar button { text-align: left; color: #222; }

/* tool bars */
.toolbars { display: flex; height: 82px; background: #f0f0f0; border-bottom: 2px solid #aaa; }
.toolbar { display: flex; gap: 4px; padding: 6px 9px 0 4px; border-right: 3px solid #aaa; border-top: 3px solid #fff; }
.toolbar.axis { padding: 6px 16px 0 7px; }
.toolbar.snaps { padding: 6px 6px 0 7px; }
.grip { width: 9px; height: 64px; border: 2px solid #aaa; border-width: 0 2px; }
.sep { width: 7px; height: 42px; margin-top: 14px; border-left: 2px solid #bbb; align-self: flex-start; }
.tool { position: relative; width: 64px; height: 64px; flex: none; }
.tool svg { width: 64px; height: 64px; }
.on-green { background: #b4fab0; border: 2px solid #999; border-right-color: #fff; border-bottom-color: #fff; }
.on-gold { background: #ecc448; border: 2px solid #888; border-right-color: #fff; border-bottom-color: #fff; }
.on-green svg, .on-gold svg { width: 60px; height: 60px; }
.raised { border: 2px solid #fff; border-right-color: #999; border-bottom-color: #999; }
.raised svg { width: 60px; height: 60px; }
.fly { position: relative; }
.fly::after { content: ""; position: absolute; right: 1px; bottom: 2px; width: 7px; height: 7px; background: #111; clip-path: polygon(100% 0, 100% 100%, 0 100%); }
.letter { font: 600 42px/60px "Noto Sans", sans-serif; color: #3f3f46; padding-bottom: 4px; }
.pair { font-size: 26px; font-weight: 500; }
.glyph { font-size: 36px; fill: #3f3f46; }
.percent { font-size: 30px; fill: #3f3f46; }
.abc { font-size: 15px; font-weight: 600; fill: #222; }
.xy { font-size: 28px; fill: #333; }

/* left strip */
.work { flex: 1; display: flex; min-height: 0; }
.leftstrip { width: 80px; display: flex; flex-direction: column; }
.striphead { height: 21px; background: linear-gradient(#aaa, #aaa) 0 9px / 72px 2px no-repeat; }
.stripbody { flex: 1; display: flex; align-items: flex-end; padding: 0 0 23px 18px; background: linear-gradient(90deg, #8c8c8c, #848484 60%, #5c5c5c); }
.expand { width: 41px; height: 43px; border-radius: 6px; border: 2px solid #777; background: #c4c4c4; display: grid; place-items: center; }
.layouttab { height: 95px; padding: 15px 3px 20px 11px; background: linear-gradient(#b0bcc2, #a4c6da 60%, #a8daf6 86%, #6d7f8a 94%); border-left: 5px solid #7d8b94; }
.layouttab i { height: 60px; margin-left: -6px; background: linear-gradient(#a4aaac, #8a9092); border: 3px solid #7b848a; }

/* viewport */
.center { flex: 1; min-width: 0; display: flex; flex-direction: column; }
.viewport { position: relative; flex: 1; background: linear-gradient(#4a4a4a, #9e9e9e); }
.viewport::after { content: ""; position: absolute; inset: 0; border: 5px solid #f2ec3c; border-top-color: #fff200; border-bottom-color: #eeea6c; pointer-events: none; }
.scene, .notes { position: absolute; inset: 0; width: 100%; height: 100%; pointer-events: none; }
.axisname { font: 20px "Noto Sans", sans-serif; }
.noteletter { font: 64px "Noto Sans CJK JP", sans-serif; fill: #e60012; text-anchor: middle; }
.vplabel { position: absolute; left: 13px; top: 11px; font-size: 26px; color: #ccc; }

.dialog {
  position: absolute; left: 2146px; top: 563px; width: 575px; padding: 0 14px 15px; border-radius: 12px;
  background: linear-gradient(100deg, #a9b4c3, #9aa6b5 35%, #758496 55%, #8b98a9); box-shadow: inset 0 0 0 2px #dfe5ec, 0 0 6px 3px #3a3f4488;
}
.dlgtitle { height: 59px; display: flex; justify-content: space-between; }
.dlgtitle h2 { font-size: 28px; line-height: 56px; padding-left: 3px; color: #16161e; }
.dlgbtns { display: flex; height: 38px; width: 161px; border: 2px solid #b4c0ce; border-top: 0; border-radius: 0 0 7px 7px; }
.dlgbtns button { width: 60px; border-right: 2px solid #6b7887; color: #fff; font-weight: 700; font-size: 28px; text-shadow: 0 0 3px #222; display: grid; place-items: center; }
.dlgbtns button + button { flex: 1; border: 0; }
.dlgbtns svg { width: 34px; height: 27px; }
.dlgbody { background: #f0f0f0; padding: 28px 22px 21px; box-shadow: 0 0 0 2px #37474f, 0 0 0 4px #cdd6e0; display: flex; flex-direction: column; }
.pair-sets { display: grid; grid-template-columns: 1fr 1fr; gap: 15px; }
fieldset { min-width: 0; border: 2px solid #aaa; }
legend { margin-left: 10px; padding: 0 6px; }
fieldset[disabled] { color: #a0a0a0; }
.pair-sets fieldset { height: 179px; padding-left: 18px; display: flex; flex-direction: column; gap: 13px; }
.pair-sets legend { margin-left: -9px; margin-bottom: 16px; }
.pair-sets .ctl { padding-left: 12px; }
.pair-sets .ctl legend { margin-left: -3px; }
label { display: flex; align-items: center; white-space: nowrap; }
.pair-sets label { gap: 13px; }
.copies { display: flex; height: 31px; margin-top: 18px; }
.copies label { width: 259px; }
.copies .num { width: 83px; margin-right: 7px; }
.namelabel { margin-top: 19px; }
.objname { height: 42px; margin-top: 5px; border: 0; border-top: 2px solid #bbb; background: #fff; padding: 0 6px 4px; }
.dlgactions { display: flex; justify-content: flex-end; gap: 9px; margin-top: 22px; }
.dlgactions .push { width: 157px; height: 48px; }

.push { border: 2px solid #fff; border-right-color: #888; border-bottom-color: #888; background: #f1f1f1; overflow: hidden; }
.push:disabled { color: #a6a6a6; }
.num { border: 4px solid #111; border-width: 4px 0 0 4px; background: #fff; padding: 0 6px; outline: 0; }
.spin { display: flex; flex-direction: column; width: 23px; border: 2px solid #fff; border-right-color: #999; border-bottom-color: #999; }
.spin button { flex: 1; display: grid; place-items: center; }
.spin button::before { content: ""; width: 12px; height: 8px; background: #111; clip-path: polygon(50% 0, 100% 100%, 0 100%); }
.spin button + button::before { clip-path: polygon(0 0, 100% 0, 50% 100%); }

input[type=radio], input[type=checkbox] { appearance: none; margin: 0; flex: none; display: grid; place-items: center; background: #fff; }
input[type=radio] { width: 22px; height: 22px; border-radius: 50%; border: 3px solid #888; border-right-color: #f4f4f4; border-bottom-color: #f4f4f4; }
input[type=radio]:checked::before { content: ""; width: 12px; height: 12px; border-radius: 50%; background: #111; }
input[type=checkbox] { width: 24px; height: 24px; border: 3px solid #888; border-right: 1px solid #ddd; border-bottom: 1px solid #ddd; }
input[type=checkbox]:checked::before { content: ""; width: 16px; height: 15px; background: #111; clip-path: polygon(0 35%, 35% 65%, 100% 0, 100% 40%, 35% 100%, 0 70%); }
input:disabled { background: #eee; }
input:disabled:checked::before { background: #999; }

/* time slider and ruler */
.slider { height: 37px; display: flex; padding: 0 0 3px 2px; background: #bebec2; }
.slider button { background: #f0f0f0; line-height: 28px; }
.arrow { width: 32px; border-bottom: 2px solid #999; }
.thumb { width: 264px; border: 2px solid #fff; border-right: 3px solid #111; border-bottom: 4px solid #111; }
.trackbar { height: 55px; display: flex; padding-left: 2px; border-top: 2px solid #fff; box-shadow: inset 0 2px #999; }
.minicurve { width: 108px; display: grid; place-items: center; }
.minicurve svg { width: 40px; height: 36px; margin-right: 18px; }
.ruler { flex: 1; margin: 2px 104px 3px 0; padding: 0 12px 0 8px; display: flex; background: #c9c9c9; }
.tick { flex: 1; position: relative; height: 28px; border-left: 2px solid #888; }
.tick.major { height: 49px; }
.tick.last { flex: none; width: 0; }
.tick b { position: absolute; left: -31px; width: 60px; top: 22px; text-align: center; font-weight: 400; }
.tick.current { border-left-color: transparent; }
.tick.current::before { content: ""; position: absolute; left: -10px; top: 2px; width: 18px; height: 49px; background: #8fb0c8; border: 2px solid #5d7c94; }

/* command panel */
.panel { width: 386px; display: flex; flex-direction: column; border-bottom: 2px solid #aaa; }
.tabs { display: flex; margin-top: 7px; height: 52px; padding-left: 6px; border-bottom: 2px solid #aaa; }
.tabs button { width: 61px; background: #fff; border: 3px solid #999; border-width: 2px 3px 0 1px; border-radius: 6px 6px 0 0; display: grid; place-items: center; }
.tabs .active { background: #f0f0f0; margin-top: -2px; height: 54px; }
.tabs svg { width: 48px; height: 40px; }
.namerow { display: flex; gap: 10px; margin: 12px 12px 0 25px; height: 39px; }
.namerow .num { flex: 1; padding: 0 0 4px 2px; }
.swatch { width: 33px; border: 2px solid #999; border-right: 0; background: linear-gradient(#000 16px, #fff 16px); }
.modlist { margin: 14px 14px 0 25px; height: 52px; }
.modlist select { background: #fff; padding: 0 28px 4px 4px; }
.modbtns { margin: 11px 40px 0 37px; display: grid; grid-template-columns: 152px 150px; grid-auto-rows: 42px; gap: 6px 7px; }
.stack { margin: 17px 22px 0 25px; height: 202px; background: #fff; border: 3px solid #888; list-style: none; font-weight: 700; }
.stack li { height: 33px; display: flex; align-items: center; padding-left: 10px; border-bottom: 2px solid #888; }
.stack .sel { background: #757575; border: 0; }
.stack svg { width: 24px; height: 28px; }
.stack span { margin-left: 12px; }
.stack .sel svg { margin-left: 4px; }
.stack .sel span { margin-left: 50px; }
.stacktools { margin: 9px 34px 0 27px; height: 48px; display: flex; justify-content: space-between; align-items: center; }
.stacktools i { width: 2px; height: 34px; background: #aaa; }
.stacktools button { width: 49px; height: 48px; display: grid; place-items: center; }
.stacktools .in { border: 2px solid #aaa; border-right-color: #fff; border-bottom-color: #fff; }
.stacktools svg { width: 44px; height: 38px; }
.rollouts { flex: 1; margin: 42px 12px 13px 10px; border: 2px solid #aaa; border-right: 4px solid #fff; border-bottom: 4px solid #fff; border-left: 0; box-shadow: 0 -16px 0 0 #f0f0f0, 0 -19px 0 0 #222; }
.rollout { margin: 25px 9px 0 4px; border: 2px solid #a4a4a4; padding-bottom: 17px; }
.rollhead { position: relative; display: block; width: 332px; height: 33px; margin: -17px 0 22px 7px; border: 2px solid #fff; border-right-color: #888; border-bottom-color: #888; background: #f0f0f0; }
.rollhead span { position: absolute; left: 10px; }
.prow { display: flex; justify-content: flex-end; height: 33px; margin-bottom: 7px; padding-right: 21px; }
.prow label { margin-right: 16px; }
.prow .num { width: 118px; margin-right: 5px; padding-bottom: 2px; }
.rollout fieldset { margin: 0 2px 0 7px; display: flex; flex-direction: column; }
.rollout .caps { margin-top: -2px; padding: 0 0 14px 87px; gap: 10px; }
.caps legend { margin: 0 0 7px -80px; }
.caps label { gap: 14px; }
.caps .two { display: flex; gap: 64px; margin: 3px 0 0 -51px; }
.caps .two label, .outs label { gap: 13px; }
.rollout .outs { margin-top: 6px; padding: 0 0 10px 77px; gap: 14px; }
.outs legend { margin: 0 0 1px -70px; }
.checks { margin: 4px 0 0 9px; }
.checks label { height: 34px; gap: 11px; }
.checks .indent { margin-left: 45px; }
.checks .off { color: #a6a6a6; }

/* status bar */
.status { height: 104px; display: flex; }
.listener { width: 202px; padding: 6px 0 4px; display: flex; flex-direction: column; gap: 3px; }
.listener input { flex: 1; height: 45px; border: 3px solid #777; border-right: 0; border-bottom: 0; background: #fff; padding: 0 8px 8px; }
.listener .pink { background: #dcc4c6; }
.prompts { flex: 1; min-width: 0; margin-left: 15px; padding: 10px 0 0 5px; border-left: 2px solid #aaa; display: flex; flex-direction: column; gap: 9px; }
.line { display: flex; height: 43px; }
.sunk { border: 2px solid #aaa; border-right-color: #fff; border-bottom-color: #fff; padding: 0 9px; line-height: 38px; white-space: nowrap; overflow: hidden; }
.grow { flex: 1; }
.fixed { width: 210px; }
.modes { display: flex; padding: 0 4px 0 2px; }
.modes button { width: 56px; display: grid; place-items: center; }
.modes svg { width: 36px; height: 36px; }
.coord { display: flex; }
.coord label { width: 42px; padding-left: 3px; }
.coord .num { width: 117px; margin-right: 5px; padding: 0 2px 4px; }
.coord .spin { width: 22px; height: 35px; margin-top: 2px; }
.coord + .sunk { margin-left: 8px; }
.adaptive { width: 46px; margin: 0 6px 0 7px; background: #e6cf50; border: 3px solid #aaa0b8; display: grid; place-items: center; }
.adaptive svg { width: 36px; height: 36px; }
.keys { display: flex; padding: 8px 0 5px 9px; }
.bigkey { width: 90px; display: grid; place-items: center; margin-right: 9px; }
.bigkey svg { width: 60px; height: 32px; }
.keycol { width: 134px; display: grid; grid-template-rows: 45px 43px; gap: 3px; margin-right: 8px; }
.keycol.wide { width: 243px; margin-right: 11px; }
.keycol .combo { width: 240px; height: 42px; }
.keycol .combo select { padding-bottom: 5px; }
.filterrow { display: flex; }
.tangent { width: 55px; }
.tangent svg { width: 42px; height: 40px; }
.filterrow .push { flex: 1; }
.play { width: 264px; padding-top: 8px; }
.prow1 { display: grid; grid-template-columns: 56px 50px 48px 50px 60px; height: 45px; margin-bottom: 3px; }
.prow1 button { display: grid; place-items: center; }
.prow1 button:nth-child(1), .prow1 button:nth-child(4) { border-right: 2px solid #aaa; }
.prow1 svg { width: 44px; height: 34px; }
.prow2 { display: flex; height: 42px; }
.prow2 > button { width: 56px; display: grid; place-items: center; margin-right: 4px; }
.prow2 > button svg { width: 42px; height: 34px; }
.prow2 .num { width: 131px; margin-right: 5px; padding: 0 2px 4px; }
.prow2 .spin { width: 23px; margin: 2px 0 4px; }
.prow2 .tcfg { flex: 1; margin: 0; }
.prow2 .tcfg svg { width: 38px; height: 40px; }
.nav { width: 203px; padding: 3px 1px 0 6px; display: grid; grid-template-columns: repeat(4, 1fr); grid-template-rows: 50px 46px; border-left: 2px solid #aaa; }
.nav button { display: grid; place-items: center; }
.nav svg { width: 38px; height: 38px; }
```
